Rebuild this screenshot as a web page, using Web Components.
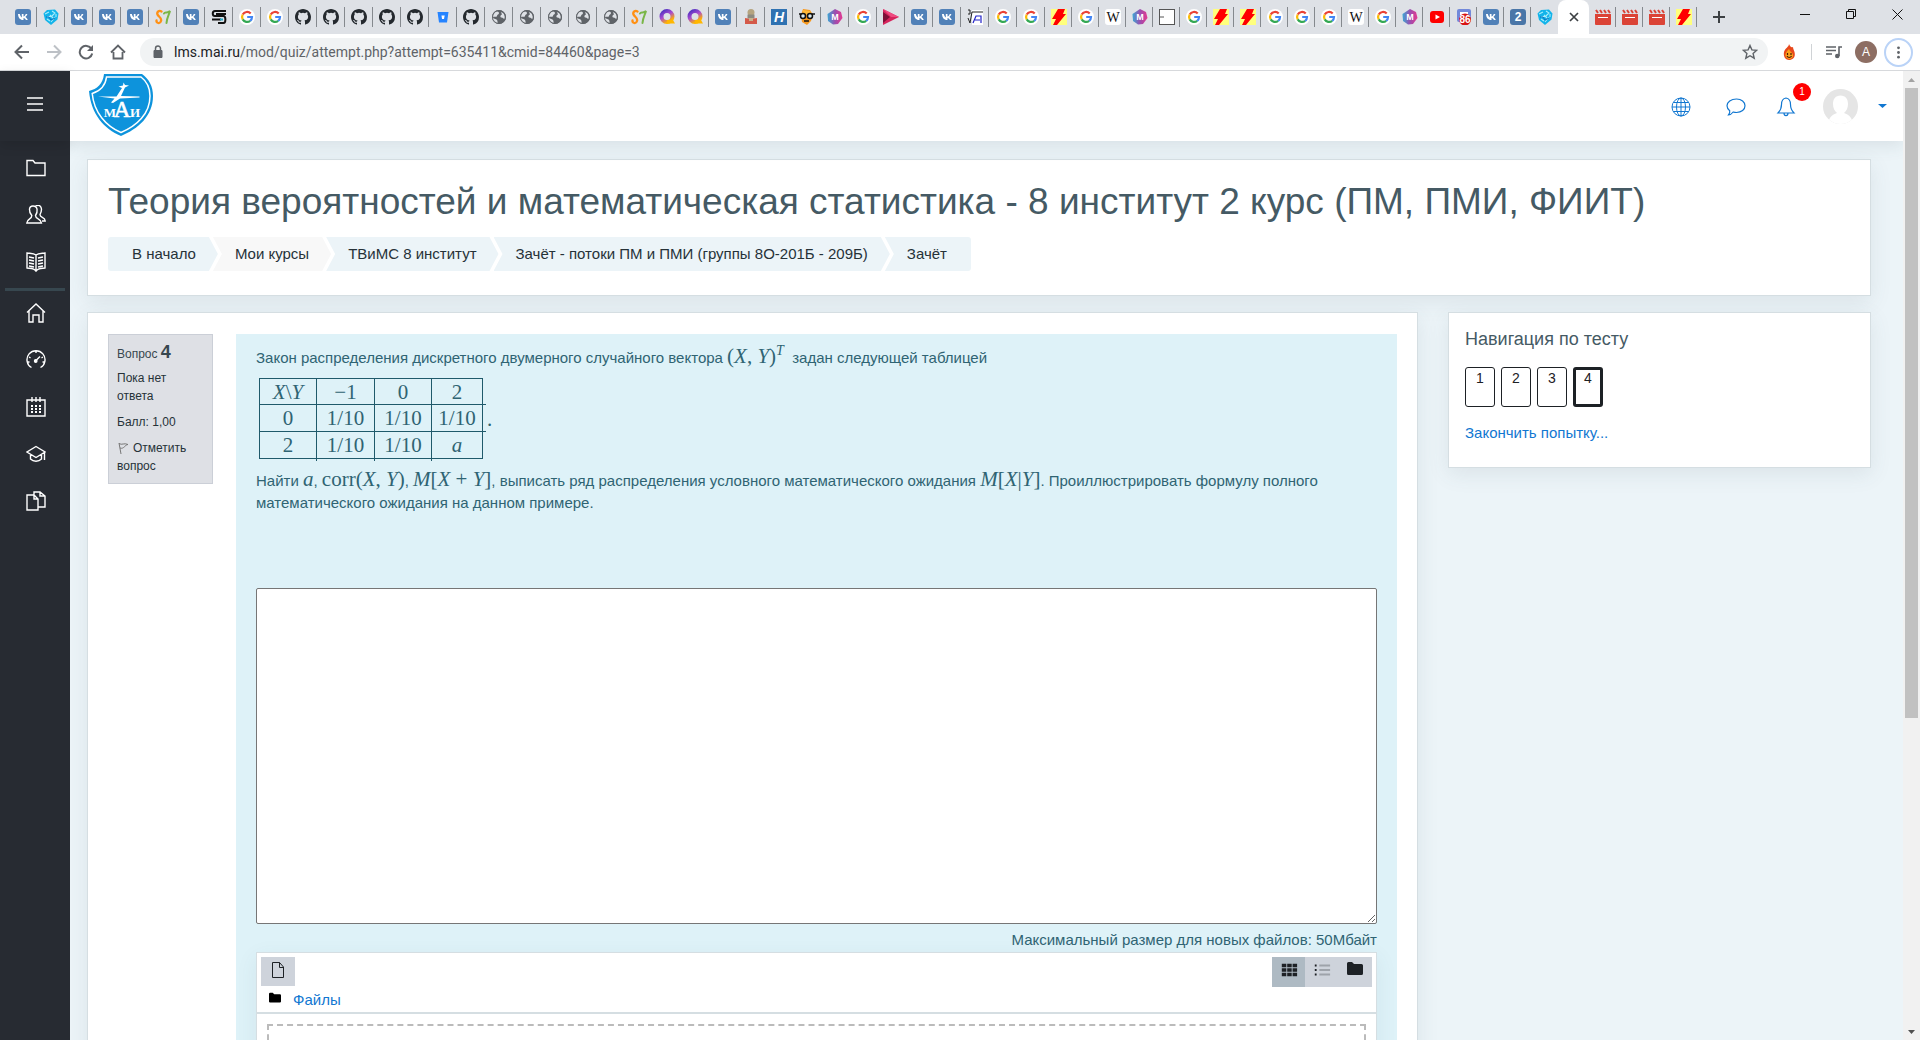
<!DOCTYPE html>
<html lang="ru">
<head>
<meta charset="utf-8">
<title>Зачёт</title>
<style>
html,body{height:100%}
body{margin:0;font-family:"Liberation Sans",sans-serif;background:#ecf4f8;overflow:hidden}
</style>
</head>
<body>
<lms-window></lms-window>
<script>
const define = (name, html, setup) => customElements.define(name, class extends HTMLElement {
  constructor() {
    super();
    this.attachShadow({ mode: 'open' });
  }
  connectedCallback() {
    if (this.shadowRoot.childNodes.length) return;
    const t = document.createElement('template');
    t.innerHTML = '<style>*{box-sizing:border-box}svg{display:block}button{font:inherit;color:inherit;border:0;background:none;padding:0;margin:0;cursor:pointer}a{text-decoration:none}</style>' + (typeof html === 'function' ? html(this) : html);
    this.shadowRoot.append(t.content.cloneNode(true));
    if (setup) setup(this.shadowRoot, this);
  }
});

/* ---------- favicons, each on a 16 x 16 grid ---------- */
const letter = (t, x, y, size, fill, extra = '') => `<text x="${x}" y="${y}" font-size="${size}" fill="${fill}" text-anchor="middle" font-weight="bold" font-family="Liberation Sans,sans-serif" ${extra}>${t}</text>`;
const FAV = {
  vk: '<rect width="16" height="16" rx="3" fill="#5181b8"/><path d="M3 5h1.8c.4 1.8 1.3 3.1 2 3.4V5h1.700v2.600C9.400 7.400 10.300 6.300 10.700 5h1.700c-.3 1.200-1.200 2.300-2 2.900.9.500 1.900 1.500 2.400 3.100h-1.900c-.4-1.100-1.200-1.900-2.400-2.100V11h-.4C5 11 3.200 8.800 3 5z" fill="#fff"/>',
  mai: '<path d="M4 1l8-.5 3.500 4-1 6L8 16 2 11 .5 4.500z" fill="#12b4ea"/><path d="M2 5l4-2M9 2l3 2-3 3-5 1M12 8l-4 5M4 10l3 2M13 5v3M7 6l3 3" stroke="#a8ecfb" stroke-width="1.100" fill="none"/><path d="M3 8h3l2 3 4-2" stroke="#0a6fc0" fill="none"/>',
  s7: '<path d="M6.500 2.500C4 1 1.500 3 2.500 5.500S7 8.500 6 12 1 14 1.500 11.500" fill="none" stroke="#ff9014" stroke-width="2.300" stroke-linecap="round"/><path d="M9 4.500C10 2 12.500 5 15 2c-1 4-3 6-3.500 12" fill="none" stroke="#7ab648" stroke-width="2" stroke-linecap="round"/>',
  sd: '<path d="M15 2H4C1 2 1 7 4 7h8.500c2.500 0 2.500 7 0 7H7M15 5H5M1 10.500h9" fill="none" stroke="#111" stroke-width="2"/><path d="M9 9.500h3v2H9z" fill="#27a7c4"/>',
  g: '<circle cx="8" cy="8" r="8" fill="#fff"/><g fill="none" stroke-width="2.200"><path d="M11.700 4.500A5 5 0 0 0 3.700 5.600" stroke="#ea4335"/><path d="M3.700 5.600a5 5 0 0 0 0 4.800" stroke="#fbbc05"/><path d="M3.700 10.400a5 5 0 0 0 7.500 1.400" stroke="#34a853"/><path d="M11.200 11.800A5 5 0 0 0 13 8H8.200" stroke="#4285f4"/></g>',
  gh: '<path fill="#24292e" d="M8 0C3.580 0 0 3.580 0 8c0 3.540 2.290 6.530 5.470 7.590.4.070.55-.17.55-.38 0-.19-.01-.82-.01-1.490-2.010.37-2.530-.49-2.690-.94-.09-.23-.48-.94-.82-1.130-.28-.15-.68-.52-.01-.53.63-.01 1.080.58 1.230.82.72 1.210 1.870.87 2.330.66.07-.52.28-.87.51-1.070-1.780-.2-3.640-.89-3.640-3.950 0-.87.31-1.590.82-2.150-.08-.2-.36-1.020.08-2.120 0 0 .67-.21 2.200.82a7.600 7.600 0 0 1 4 0c1.530-1.040 2.200-.82 2.200-.82.44 1.100.16 1.920.08 2.120.51.56.82 1.270.82 2.150 0 3.070-1.870 3.750-3.650 3.950.29.25.54.73.54 1.480 0 1.070-.01 1.930-.01 2.200 0 .21.15.46.55.38A8 8 0 0 0 16 8c0-4.420-3.580-8-8-8z"/>',
  bb: '<path d="M2.500 3h11l-1.500 10.500H4z" fill="#2684ff"/><path d="M6.500 6.500h3.200L9 10H7z" fill="#fff"/>',
  globe: '<circle cx="8" cy="8" r="7" fill="#5f6368"/><path d="M4 3c2-1 4-.5 4 1S6 5.500 6 7 3 7 2 8c0 2 3 1.500 4 3s0 2 1 3c-4 0-6-3-5.500-7zM10 3c3 1 4.500 4 3.500 7-1 0-1.500-1.500-3-1.500S9 6 11 5.500z" fill="#dee1e6"/><circle cx="8" cy="8" r="6.500" fill="none" stroke="#5f6368"/>',
  q: '<defs><linearGradient id="q" x1="0" y1="0" x2=".6" y2="1"><stop offset="0" stop-color="#4b2fc0"/><stop offset=".5" stop-color="#a94bd0"/><stop offset="1" stop-color="#ffb400"/></linearGradient></defs><circle cx="8" cy="7.500" r="5.500" fill="none" stroke="url(#q)" stroke-width="4"/><path d="M8 11h6l2 3.500H8z" fill="#ffb700"/>',
  reader: '<circle cx="8" cy="3.500" r="3.500" fill="#b5a480"/><path d="M4.500 5.500h7v4h-7z" fill="#8d8a80"/><path d="M2 9l6 1 6-1v6H2z" fill="#d45a4a"/><path d="M6 9h4v3H6z" fill="#c9b28d"/>',
  h: '<rect width="16" height="16" fill="#2f72b2"/>' + letter('H', 8, 13, 14, '#fff', 'font-style="italic"'),
  nerd: '<path d="M4 0l7 1 3 5-2 6-4 4-5-3-1-7z" fill="#f7981c"/><path d="M4 1l7 1 2 4H3z" fill="#ffb938"/><g fill="#d8e8ee" stroke="#111" stroke-width="1.500"><circle cx="4" cy="7" r="2.500"/><circle cx="11" cy="7" r="2.500"/></g><path d="M0 5h2M13 5h3M5 12h5" stroke="#111" stroke-width="1.500"/>',
  m: '<defs><linearGradient id="m"><stop offset="0" stop-color="#3ba7d4"/><stop offset=".5" stop-color="#9a4fb0"/><stop offset="1" stop-color="#e63890"/></linearGradient></defs><path d="M8 0l6 3 1.500 6L11 15l-5 .5L1 12 .5 5z" fill="url(#m)"/>' + letter('M', 8, 11, 9, '#fff'),
  play: '<path d="M0 0l16 8-16 8V0z" fill="#d6245c"/><path d="M0 3l7 5-7 6z" fill="#7d1038"/><path d="M0 0l16 8H8z" fill="#ef4a80"/>',
  root: '<rect x="5" y="1" width="11" height="15" fill="#fff"/><path d="M1 1h2v4H1M1 9l2 5 2-11h11" fill="none" stroke="#222"/><path d="M6 14l3-7h5v7M8 11h5" fill="none" stroke="#2222c8" stroke-width="1.200"/>',
  zip: '<rect width="16" height="16" fill="#ffff7d"/><path d="M7 0h7l-2 5h3L6 16H2l3-6H1z" fill="#f00"/>',
  w: '<rect width="16" height="16" rx="3" fill="#fff"/><text x="8" y="13" font-size="14" fill="#111" text-anchor="middle" font-family="Liberation Serif,serif">W</text>',
  box: '<rect x=".500" y=".500" width="15" height="15" fill="#fff" stroke="#555"/><path d="M1 8h4" stroke="#555"/>',
  yt: '<rect x="1" y="2" width="14" height="12" rx="3" fill="#f00"/><path d="M6.500 5.500v5L11 8z" fill="#fff"/>',
  dis: '<rect x="1" width="14" height="13" rx="2" fill="#7289da"/><path d="M4 3h8v4H4z" fill="#fff"/><circle cx="9" cy="10.500" r="6" fill="#d81414"/>' + letter('86', 9, 14, 10, '#fff'),
  two: '<rect width="16" height="16" rx="3" fill="#4a76a8"/>' + letter('2', 8, 12, 12, '#fff'),
  clap: '<path d="M0 5h16v10a1 1 0 0 1-1 1H1a1 1 0 0 1-1-1z" fill="#db4437"/><path d="M1 1l2 3M5 1l2 3M9 1l2 3M13 1l2 3" stroke="#db4437" stroke-width="2"/><path d="M3 8.500h10" stroke="#fff"/>'
};
define('fav-icon', el => `<style>:host{display:block;width:16px;height:16px}</style><svg width="16" height="16" viewBox="0 0 16 16">${FAV[el.getAttribute('kind')]}</svg>`);

/* ---------- line icons ---------- */
const ICON = {
  menu: [16, '<path d="M0 2h16M0 8h16M0 14h16" stroke-width="1.500"/>'],
  folder: [20, '<path d="M1 17V2.500h6L9 5h10v12.500H1z"/>'],
  users: [20, '<path d="M7 1c5 0 5 6 2.500 9.500 0 4 5.500 2.500 6 7.500H.8c.5-5 5-3.500 5-7.500C2.500 6.500 2.500 1 7 1z"/><path d="M9.500 1C14-1.500 17.500 3 14 9.500c0 3.500 5 2 5.200 6.500H16"/>'],
  book: [20, '<path d="M10 3v16M10 3C7.500 1 4 1.500 1 1v15c3 .5 7 0 9 3 2-3 6-2.500 9-3V1c-3 .5-6.500 0-9 2zM3 5l5 1M3 8l5 1M3 11l5 1M3 14l5 1M17 5l-5 1M17 8l-5 1M17 11l-5 1M17 14l-5 1"/>'],
  home: [20, '<path d="M1 9.500L10 1l9 8.500M3 8v11h4v-7h6v7h4V8"/>'],
  gauge: [20, '<path d="M5.500 17.500a9 9 0 1 1 9 0M10 10.500l4-4M3 7l1.500.8M10 1v2M17 7l-1.500.8M1.500 12h2M18.500 12h-2"/><circle cx="9.700" cy="11" r="1.200" fill="currentColor"/>'],
  calendar: [20, '<path d="M1 3h18v16H1zM6 0v5M10 0v5M14 0v5"/><path d="M5 9h2M9 9h2M13 9h2M5 12h2M9 12h2M13 12h2M5 15h2M9 15h2M13 15h2" stroke-width="2"/>'],
  cap: [20, '<path d="M10 2.500L19 8l-9 5.500L1 8zM4.500 10v5c3 3 8 3 11 0v-5M18.500 8v8"/>'],
  copy: [20, '<path d="M1 4h7l4 4v11H1zM8 4v4h4M8 4V1h6l5 4v11h-7M14 1v4h5"/>'],
  globe: [20, '<circle cx="10" cy="10" r="9"/><ellipse cx="10" cy="10" rx="4.500" ry="9"/><path d="M10 1v18M1 10h18M2.500 5.500h15M2.500 14.500h15"/>'],
  chat: [20, '<path d="M10.500 2c5 0 8.500 3 8.500 6.800s-3.500 6.700-8.500 6.700c-1.300 0-2.300-.2-3.300-.5C6 16.500 4.500 18 2.500 18c1-1.200 1.500-2.800 1.200-4.300C1 11.500 1 10 1 8.800 1 5 5 2 10.500 2z"/>'],
  bell: [20, '<path d="M10 1C6.500 1.500 5.500 4 5.500 7.500c0 4-1 6-3.500 8.500h16c-2.500-2.500-3.500-4.500-3.500-8.500C14.500 4 13.500 1.500 10 1zM8 16c0 3.500 4 3.500 4 0"/>'],
  page: [16, '<path d="M2.500 .5h7l4 4.500v10.500h-11zM9.500 .5v5h4"/>'],
  back: [16, '<path d="M15 8H2M8 1.500L1.500 8 8 14.500" stroke-width="2"/>'],
  forward: [16, '<path d="M1 8h13M8 1.500L14.500 8 8 14.500" stroke-width="2"/>'],
  reload: [16, '<path d="M13.500 5A6.300 6.300 0 1 0 14.200 9.500" stroke-width="2"/><path d="M15 1v6H9z" fill="currentColor" stroke="none"/>'],
  house: [16, '<path d="M3.500 8v6.500h9V8M1 8.500L8 1.500l7 7" stroke-width="1.800"/>'],
  lock: [16, '<path d="M4 6.500h8v7H4z" fill="currentColor"/><path d="M5.500 7V4.500a2.500 2.500 0 0 1 5 0V7" stroke-width="1.500"/>'],
  star: [16, '<path d="M8 1.500l1.900 4.400 4.800.4-3.600 3.200 1.100 4.700L8 11.700l-4.200 2.500 1.100-4.700L1.300 6.300l4.800-.4z" stroke-width="1.400"/>'],
  music: [16, '<path d="M0 3h10M0 6.500h10M0 10h6M16 3h-3v9" stroke-width="1.600"/><circle cx="11.300" cy="12" r="2.300" fill="currentColor" stroke="none"/>'],
  dots: [16, '<g fill="currentColor" stroke="none"><circle cx="8" cy="3" r="1.500"/><circle cx="8" cy="8" r="1.500"/><circle cx="8" cy="13" r="1.500"/></g>'],
  plus: [12, '<path d="M6 0v12M0 6h12" stroke-width="2"/>'],
  cross: [10, '<path d="M1 1l8 8M9 1L1 9" stroke-width="1.700"/>'],
  min: [10, '<path d="M0 5.500h10"/>'],
  restore: [10, '<path d="M.5 2.500h7v7h-7zM2.500 2.500v-2h7v7h-2"/>'],
  close: [11, '<path d="M.5.5l10 10M10.500.5l-10 10"/>'],
  flag: [12, '<path d="M2 1l2 11M2 1.500c3 2 5-1 9 1-3 0-4 5-8 3.500" stroke="#777"/>'],
  grid: [20, '<g fill="currentColor" stroke="none"><path d="M2 3h5v4H2zM8 3h5v4H8zM14 3h5v4h-5zM2 8h5v4H2zM8 8h5v4H8zM14 8h5v4h-5zM2 13h5v4H2zM8 13h5v4H8zM14 13h5v4h-5z"/></g>'],
  list: [20, '<path d="M2 5h2M2 10h2M2 15h2" stroke-width="2"/><path d="M7 5h12M7 10h12M7 15h12" stroke="#9ea3aa" stroke-width="2"/>'],
  solid: [16, '<path d="M0 2.500Q0 1 1.500 1H5l2 2h7.500Q16 3 16 4.500v8q0 1.500-1.500 1.500h-13Q0 14 0 12.500z" fill="currentColor" stroke="none"/>'],
  fire: [16, '<path d="M8 0c0 3-4 4-5 8-1 5 2 8 5 8s7-2 5.500-8C13 6 12 5 12 3 10 4 9 2 8 0z" fill="#e8481c" stroke="none"/><path d="M8 5c-3 3-4 5-3.500 7S7 15 8.500 15s4-1.500 3.500-4.500C11 8 9 8 8 5z" fill="#f9a11b" stroke="none"/><path d="M6.500 9v2M10 9v2M6 12c1 2 3.500 2 4.500 0" stroke="#4a1a08" stroke-width="1.200"/>']
};
define('line-icon', el => {
  const [box, body] = ICON[el.getAttribute('name')];
  const s = el.getAttribute('size') || box;
  return `<style>:host{display:block;flex:none}</style><svg width="${s}" height="${s}" viewBox="0 0 ${box} ${box}" fill="none" stroke="currentColor" stroke-width="${el.getAttribute('weight') || 1}">${body}</svg>`;
});

/* ---------- browser frame ---------- */
define('tab-strip', () => {
  const first = 'vk mai vk vk vk s7 vk sd g g gh gh gh gh gh bb gh globe globe globe globe globe s7 q q vk reader h nerd m g play vk vk root g g'.split(' ');
  const second = 'zip g w m box g zip zip g g g w g m yt dis vk two mai'.split(' ');
  const last = 'clap clap clap zip'.split(' ');
  const tab = (k, c = '') => `<div class="tab ${c}"><fav-icon kind="${k}"></fav-icon></div>`;
  return `<style>
:host{display:flex;height:34px;background:#dee1e6;padding-left:9px;color:#3c4043;flex:none}
.tab{width:27px;display:flex;align-items:center;justify-content:center;position:relative}
.wide{width:28px}
.tab::after{content:"";position:absolute;right:0;top:7px;height:20px;width:1px;background:#85898e}
.tab.end::after{display:none}
.active{width:31px;background:#fff;border-radius:8px 8px 0 0;display:flex;align-items:center;justify-content:center}
.new{margin-left:16px;display:flex;align-items:center}
.win{margin-left:auto;display:flex;align-items:center;gap:36px;padding:0 17px 6px 0;color:#111}
</style>` + first.map(k => tab(k, 'wide')).join('') + second.map((k, i) => tab(k, i === second.length - 1 ? 'end' : '')).join('') +
`<button class="active" aria-label="Закрыть вкладку"><line-icon name="cross"></line-icon></button>` + last.map(k => tab(k)).join('') +
`<button class="new" aria-label="Новая вкладка"><line-icon name="plus"></line-icon></button>
<div class="win"><button aria-label="Свернуть"><line-icon name="min"></line-icon></button><button aria-label="Развернуть"><line-icon name="restore"></line-icon></button><button aria-label="Закрыть"><line-icon name="close"></line-icon></button></div>`;
});

define('address-bar', `<style>
:host{display:flex;align-items:center;height:37px;background:#fff;border-bottom:1px solid #d7d9dc;padding:0 7px 0 14px;color:#5f6368;flex:none}
.nav{display:flex;gap:16px;padding-right:14px}
.off{color:#bdc1c6}
.box{flex:1;height:28px;border-radius:14px;background:#f1f3f4;display:flex;align-items:center;padding:0 10px}
.url{flex:1;margin-left:8px;font:14px/20px Roboto,sans-serif;color:#5f6368}
.url b{font-weight:normal;color:#202124}
.tools{display:flex;align-items:center;padding-left:13px}
.sep{width:1px;height:16px;background:#d0d3d6;margin:0 14px}
.who{width:22px;height:22px;border-radius:50%;background:#8d6e63;color:#fff;font:12px/22px "Liberation Sans",sans-serif;text-align:center;margin:0 7px 0 13px}
.menu{width:29px;height:29px;border:2px solid #bad3f7;border-radius:50%;display:flex;align-items:center;justify-content:center}
</style>
<div class="nav"><button aria-label="Назад"><line-icon name="back"></line-icon></button><button class="off" aria-label="Вперёд"><line-icon name="forward"></line-icon></button><button aria-label="Обновить"><line-icon name="reload"></line-icon></button><button aria-label="Домой"><line-icon name="house"></line-icon></button></div>
<div class="box"><line-icon name="lock"></line-icon><span class="url"><b>lms.mai.ru</b>/mod/quiz/attempt.php?attempt=635411&amp;cmid=84460&amp;page=3</span><button aria-label="В закладки"><line-icon name="star"></line-icon></button></div>
<div class="tools"><line-icon name="fire"></line-icon><span class="sep"></span><line-icon name="music"></line-icon><span class="who">A</span><button class="menu" aria-label="Меню"><line-icon name="dots" size="15"></line-icon></button></div>`);

define('scroll-bar', `<style>
:host{display:flex;flex-direction:column;align-items:center;width:17px;background:#f1f1f1;flex:none}
i{width:17px;height:17px;display:flex;align-items:center;justify-content:center}
.thumb{width:13px;height:65%;background:#c1c1c1}
.space{flex:1}
</style><i><svg width="7" height="4"><path d="M0 4L3.500 0 7 4z" fill="#a3a3a3"/></svg></i><div class="thumb"></div><div class="space"></div><i><svg width="7" height="4"><path d="M0 0h7L3.500 4z" fill="#505050"/></svg></i>`);

/* ---------- LMS frame ---------- */
define('side-nav', () => {
  const link = (n, l) => `<a href="#" aria-label="${l}"><line-icon name="${n}" weight="1.400"></line-icon></a>`;
  return `<style>
:host{display:block;width:70px;background:#272b32;color:#fff;flex:none}
a{color:inherit;display:flex;height:41px;margin-bottom:6px;align-items:center;justify-content:center;padding-left:2px}
.menu{display:flex;width:100%;height:70px;align-items:center;justify-content:center;padding-bottom:4px;box-shadow:0 4px 12px rgba(0,0,0,.12)}
nav{padding-top:6px}
hr{border:0;height:3px;margin:0 5px 1px;background:#37474f}
</style><button class="menu" aria-label="Меню"><line-icon name="menu"></line-icon></button><nav>${link('folder', 'Курс')}${link('users', 'Участники')}${link('book', 'Оценки')}<hr>${link('home', 'Домой')}${link('gauge', 'Личный кабинет')}${link('calendar', 'Календарь')}${link('cap', 'Мои курсы')}${link('copy', 'Файлы')}</nav>`;
});

define('mai-logo', `<style>:host{display:block}</style><svg width="64" height="62" viewBox="0 0 64 62">
<path d="M15 0h38c7 5 11 12 11 22 0 20-15 33-32 40C15 55 2 40 0 17c8-2 14-7 15-17z" fill="#0d93dc"/>
<path d="M17.500 3H52c6 4.500 9 10.500 9 19 0 18-13.500 30-29 36.500C17 52 5 38.500 3.200 19.500 11 17 16.500 12 17.500 3z" fill="none" stroke="#fff" stroke-width="1.500"/>
<path d="M9 22.500h18.500L33 14l-3.500-1.500 4.500-1 .5-3 1.500 2.500 4 .5-4 2-4 8.500 18.500.5v1L31 24.500 24 29l-2-.5 3.500-4z" fill="#fff"/>
<g fill="#fff" font-family="Liberation Serif,serif" font-weight="bold" text-anchor="middle"><text x="21" y="43" font-size="13">М</text><text x="33" y="43" font-size="23" font-weight="normal" stroke="#fff" stroke-width=".6">А</text><text x="46" y="43" font-size="13">И</text></g></svg>`);

define('site-header', `<style>
:host{display:flex;height:70px;background:#fff;align-items:center;padding:0 16px 0 19px;box-shadow:0 4px 16px rgba(69,90,100,.13);color:#1177d1;position:relative;flex:none}
.right{margin-left:auto;display:flex;align-items:center}
.logo{padding-bottom:2px}
a,button{color:inherit;display:block}
.right a{padding-top:2px}
.right .chat{margin:0 30px 0 35px}
.bell{position:relative}
.badge{position:absolute;left:17px;top:-12px;width:18px;height:18px;border-radius:50%;background:#f00;color:#fff;font-size:10px;line-height:18px;text-align:center}
.ava{margin:0 20px 0 27px}
.caret{width:9px}
</style><a class="logo" href="#" aria-label="МАИ"><mai-logo></mai-logo></a>
<div class="right"><a href="#" aria-label="Язык"><line-icon name="globe"></line-icon></a><a class="chat" href="#" aria-label="Сообщения"><line-icon name="chat" weight="1.200"></line-icon></a><a class="bell" href="#"><line-icon name="bell" weight="1.200"></line-icon><span class="badge">1</span></a>
<button class="ava" aria-label="Профиль"><svg width="35" height="35" viewBox="0 0 35 35"><defs><clipPath id="c"><circle cx="17.500" cy="17.500" r="17.500"/></clipPath></defs><g clip-path="url(#c)"><path d="M0 0h35v35H0z" fill="#e5e5e5"/><path d="M17.500 6.500c5 0 7.500 3.500 7.500 8.500 0 4-1.500 7-4 9 5 1.500 8 5 9.500 11h-26C6 29 9 25.500 14 24c-2.500-2-4-5-4-9 0-5 2.500-8.500 7.500-8.500z" fill="#fff"/></g></svg></button>
<svg class="caret" width="9" height="5"><path d="M0 0h9L4.500 4z" fill="#1177d1"/></svg></div>`);

define('page-card', `<style>:host{display:block;background:#fff;border:1px solid #d5dee2;box-shadow:0 6px 20px rgba(69,90,100,.1);box-sizing:border-box;padding:20px;min-width:0}</style><slot></slot>`);

define('bread-crumbs', `<style>
:host{display:block}
ol{display:flex;list-style:none;margin:0;padding:0;height:34px}
li{background:#ecf4f8;padding:0 22px;line-height:34px;font-size:15px;clip-path:polygon(0 0,calc(100% - 9px) 0,100% 50%,calc(100% - 9px) 100%,0 100%,9px 50%)}
li+li{margin-left:-5px}
li:first-child{padding-left:24px;clip-path:polygon(0 0,calc(100% - 9px) 0,100% 50%,calc(100% - 9px) 100%,0 100%);border-radius:3px 0 0 3px}
li:last-child{clip-path:polygon(0 0,100% 0,100% 100%,0 100%,9px 50%);padding-right:24px;border-radius:0 3px 3px 0}
.plain{background:#f8f8f8}
a{color:#263238}
</style><ol><li><a href="#">В начало</a></li><li class="plain"><a href="#">Мои курсы</a></li><li><a href="#">ТВиМС 8 институт</a></li><li><a href="#">Зачёт - потоки ПМ и ПМИ (группы 8О-201Б - 209Б)</a></li><li><a href="#">Зачёт</a></li></ol>`);

define('course-heading', `<style>
:host{display:block;padding-bottom:4px}
h1{margin:0 0 13px;font-weight:normal;font-size:37px;line-height:44px;color:#455a64}
</style><h1><slot></slot></h1><bread-crumbs></bread-crumbs>`);

/* ---------- question ---------- */
define('question-info', `<style>
:host{display:block;width:105px;height:150px;background:#dee0e5;border:1px solid #cbcfd7;box-sizing:border-box;padding:5px 8px;font-size:12px;line-height:18px;color:#263238;flex:none}
h3{margin:0 0 3px;font-weight:normal;font-size:12px;line-height:24px;color:#37474f}
h3 b{font-size:18px}
p{margin:0 0 8px}
a{color:inherit}
line-icon{display:inline-block;vertical-align:-2px;margin-right:4px}
</style><h3>Вопрос <b>4</b></h3><p>Пока нет ответа</p><p>Балл: 1,00</p><a href="#"><line-icon name="flag"></line-icon>Отметить вопрос</a>`);

define('math-text', `<style>:host{font:21px/24px "Liberation Serif",serif}</style><slot></slot>`);

define('distribution-table', () => {
  const rows = [['<i>X</i>\\<i>Y</i>', '−1', '0', '2'], ['0', '1/10', '1/10', '1/10'], ['2', '1/10', '1/10', '<i>a</i>']];
  return `<style>
:host{display:flex;align-items:center;margin:8px 0 8px 3px;font:21px/24px "Liberation Serif",serif}
table{border-collapse:collapse;border:1px solid #1f5a6b;table-layout:fixed;width:223px}
td,th{border:1px solid #1f5a6b;height:27px;padding:0;text-align:center;font-weight:normal;position:relative}
tr:first-child th{height:26px}
tr:not(:last-child)>:last-child::after{content:"";position:absolute;left:100%;bottom:-1px;width:4px;height:1px;background:#1f5a6b}
tr:last-child>:not(:last-child)::after{content:"";position:absolute;top:100%;right:-1px;width:1px;height:3px;background:#1f5a6b}
.a{width:57px}.b{width:58px}.d{width:51px}
span{margin-left:4px}
</style><table><colgroup><col class="a"><col class="b"><col class="a"><col class="d"></colgroup><tbody>${rows.map((r, i) => `<tr>${r.map((c, j) => i && j ? `<td>${c}</td>` : `<th>${c}</th>`).join('')}</tr>`).join('')}</tbody></table><span>.</span>`;
});

define('file-manager', `<style>
:host{display:block;background:#fff;border:1px solid #d5dee2;box-shadow:0 6px 20px rgba(69,90,100,.08)}
.bar{display:flex;justify-content:space-between;padding:4px 4px 0;height:35px;color:#1d2125}
.new{width:34px;height:29px;background:#ced3db;display:flex;justify-content:center;padding-top:5px}
.views{display:flex;width:100px;height:30px;background:#ced3db}
.views button{flex:1;display:flex;justify-content:center;padding-top:4px}
.views .on{background:#aebac3}
.path{display:flex;align-items:center;height:26px;padding-left:12px;gap:12px;font-size:15px;line-height:24px;border-bottom:2px solid #d5dee2;color:#000}
.path line-icon{padding-bottom:4px}
.path a{color:#1177d1}
.drop{margin:10px;height:140px;border:2px dashed #bbb}
</style><div class="bar"><button class="new" aria-label="Добавить файл"><line-icon name="page"></line-icon></button><div class="views"><button class="on" aria-label="Значки"><line-icon name="grid" size="18"></line-icon></button><button aria-label="Список"><line-icon name="list" size="18"></line-icon></button><button aria-label="Дерево"><line-icon name="solid"></line-icon></button></div></div>
<div class="path"><line-icon name="solid" size="12"></line-icon><a href="#">Файлы</a></div><div class="drop"></div>`);

define('question-body', `<style>
:host{display:block;flex:1;min-width:0;background:#def2f8;padding:10px 20px 20px;color:#2f6473;font-size:15px;line-height:22px}
p{margin:0}
.first{line-height:24px}
sup{font-size:14px;line-height:12px}
textarea{display:block;width:100%;height:336px;margin-top:74px;border:1px solid #767676;border-radius:2px;background:#fff;padding:6px;font:inherit;resize:both}
.max{padding-top:4px;line-height:24px;text-align:right}
</style><p class="first">Закон распределения дискретного двумерного случайного вектора <math-text>(<i>X</i>, <i>Y</i>)<sup><i>T</i></sup></math-text>&nbsp; задан следующей таблицей</p>
<distribution-table></distribution-table>
<p>Найти <math-text><i>a</i></math-text>, <math-text>corr(<i>X</i>, <i>Y</i>)</math-text>, <math-text><i>M</i>[<i>X</i> + <i>Y</i>]</math-text>, выписать ряд распределения условного математического ожидания <math-text><i>M</i>[<i>X</i>|<i>Y</i>]</math-text>. Проиллюстрировать формулу полного <span>математического ожидания на данном примере.</span></p>
<textarea aria-label="Ответ"></textarea>
<div class="max">Максимальный размер для новых файлов: 50Мбайт</div>
<file-manager></file-manager>`);

define('quiz-navigation', `<style>
:host{display:block;min-height:140px}
h2{margin:0;font-weight:normal;font-size:18px;line-height:24px;color:#455a64}
.q{display:flex;gap:6px;margin:16px 0 15px}
.q a{width:30px;height:40px;border:1px solid #1d2125;border-radius:3px;text-align:center;font-size:14px;line-height:20px;color:#1d2125}
.q .now{border-width:3px;line-height:16px}
.end{color:#1177d1;font-size:15px;line-height:22px}
</style><h2>Навигация по тесту</h2><div class="q"><a href="#">1</a><a href="#">2</a><a href="#">3</a><a class="now" href="#">4</a></div><a class="end" href="#">Закончить попытку...</a>`);

define('lms-window', `<style>
:host{display:flex;flex-direction:column;height:100vh}
.view{flex:1;display:flex;min-height:0}
.page{flex:1;min-width:0;overflow:hidden;display:flex;flex-direction:column}
main{padding:18px 32px 0 17px;display:grid;grid-template-columns:1331fr 423fr;gap:16px 30px;align-items:start}
.head{grid-column:1/-1}
.question{display:flex;gap:23px;align-items:flex-start;padding:21px 20px}
.aside{padding:14px 16px 0}
</style><tab-strip></tab-strip><address-bar></address-bar>
<div class="view"><side-nav></side-nav><div class="page"><site-header></site-header>
<main><page-card class="head"><course-heading>Теория вероятностей и математическая статистика - 8 институт 2 курс (ПМ, ПМИ, ФИИТ)</course-heading></page-card>
<page-card class="question"><question-info></question-info><question-body></question-body></page-card>
<page-card class="aside"><quiz-navigation></quiz-navigation></page-card></main></div><scroll-bar></scroll-bar></div>`);
</script>
</body>
</html>
